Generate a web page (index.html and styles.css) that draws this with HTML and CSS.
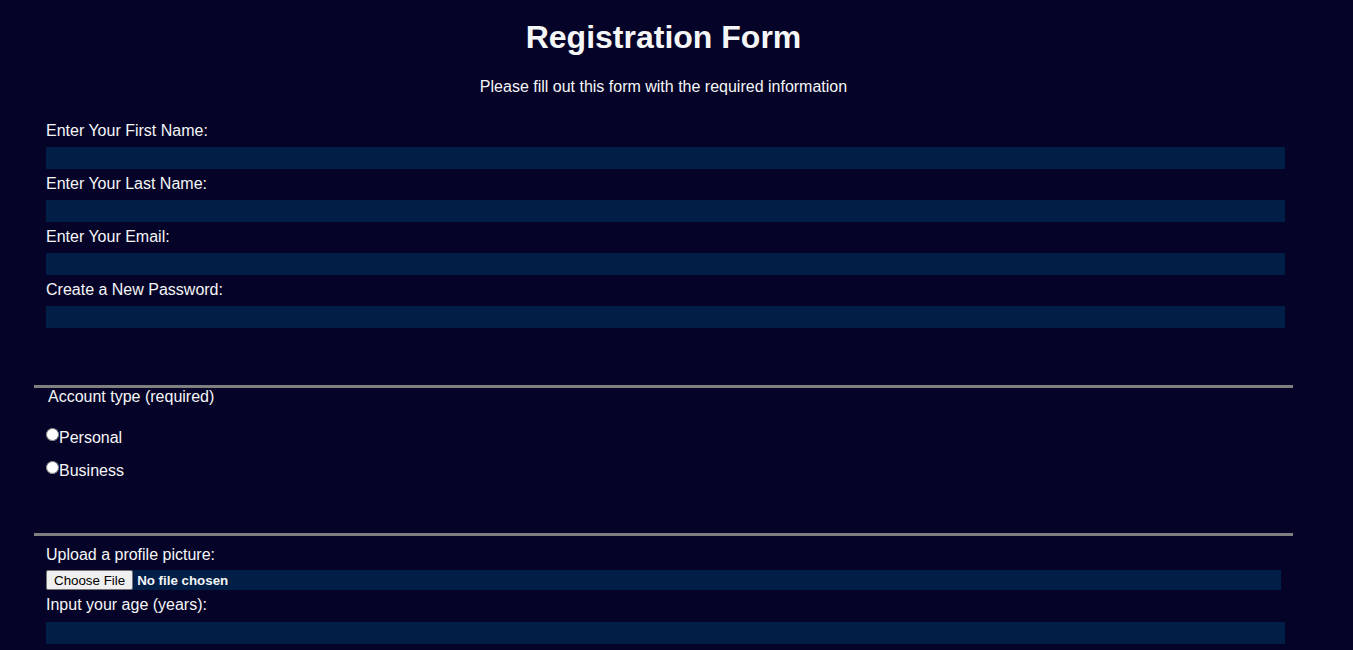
FILE: index.html
```html
<!DOCTYPE html>
<html lang="en">
<head>
<meta charset="utf-8">
<title>Registration Form</title>
<link rel="stylesheet" href="styles.css">
</head>
<body>
  <h1 class="title">Registration Form</h1>
  <p class="subtitle">Please fill out this form with the required information</p>
  <form class="form" action="#">
    <fieldset class="group group-personal">
      <div class="field">
        <label class="field-label" for="first-name">Enter Your First Name:</label>
        <input class="text-input" id="first-name" type="text">
      </div>
      <div class="field">
        <label class="field-label" for="last-name">Enter Your Last Name:</label>
        <input class="text-input" id="last-name" type="text">
      </div>
      <div class="field">
        <label class="field-label" for="email">Enter Your Email:</label>
        <input class="text-input" id="email" type="email">
      </div>
      <div class="field">
        <label class="field-label" for="new-password">Create a New Password:</label>
        <input class="text-input" id="new-password" type="password">
      </div>
    </fieldset>
    <fieldset class="group group-account">
      <legend class="group-legend">Account type (required)</legend>
      <label class="radio-label"><input class="radio" type="radio" name="account-type">Personal</label>
      <label class="radio-label"><input class="radio" type="radio" name="account-type">Business</label>
    </fieldset>
    <fieldset class="group group-extra">
      <div class="field field-file">
        <label class="field-label" for="profile-picture">Upload a profile picture:</label>
        <input class="file-input" id="profile-picture" type="file">
      </div>
      <div class="field">
        <label class="field-label" for="age">Input your age (years):</label>
        <input class="text-input text-input-age" id="age" type="number">
      </div>
    </fieldset>
  </form>
</body>
</html>
```
FILE: styles.css
```css
html, body {
  background: #050428;
}

body {
  margin: 0;
  padding: 0 58px 0 32px;
  color: #f5f6f7;
  font-family: "Liberation Sans", Arial, sans-serif;
  font-size: 16px;
  line-height: 18px;
}

.title {
  margin: 19px 0 0;
  font-size: 32px;
  line-height: 37px;
  font-weight: bold;
  text-align: center;
}

.subtitle {
  margin: 22px 0 0;
  text-align: center;
}

.form {
  margin: 0;
}

.group {
  margin: 0 2px;
  border: none;
  border-bottom: 3px solid #7f7f80;
  min-width: 0;
}

.group-personal {
  padding: 26px 12px 51px;
}

.group-account {
  padding: 22px 12px 39px;
}

.group-extra {
  padding: 10px 12px 40px;
  border-bottom: none;
}

.group-legend {
  padding: 0 2px;
  line-height: 18px;
}

.field {
  margin-bottom: 6px;
}

.field-label {
  display: block;
  line-height: 18px;
}

.text-input {
  display: block;
  box-sizing: content-box;
  width: 100%;
  height: 22px;
  margin: 7px 0 0;
  padding: 0 2px;
  border: none;
  background: #001e46;
  color: #f5f6f7;
  font-family: inherit;
}

.text-input-age {
  margin-top: 8px;
}

.radio-label {
  display: block;
  line-height: 18px;
  margin-bottom: 14px;
}

.radio {
  margin: 0;
  width: 13px;
  height: 13px;
  vertical-align: 2px;
}

.file-input {
  display: block;
  box-sizing: border-box;
  width: 100%;
  height: 20px;
  margin: 6px 0 0;
  padding: 0;
  border: none;
  background: #001e46;
  color: #f5f6f7;
  font-family: "Liberation Sans", Arial, sans-serif;
  font-size: 13.333px;
  font-weight: bold;
}

.file-input::file-selector-button {
  height: 20px;
  margin: 0 4px 0 0;
  padding: 1px 7px;
  border: 1px solid #767676;
  border-radius: 2px;
  background: #efefef;
  color: #000;
  font-family: inherit;
  font-size: 13.333px;
  font-weight: normal;
}
```
